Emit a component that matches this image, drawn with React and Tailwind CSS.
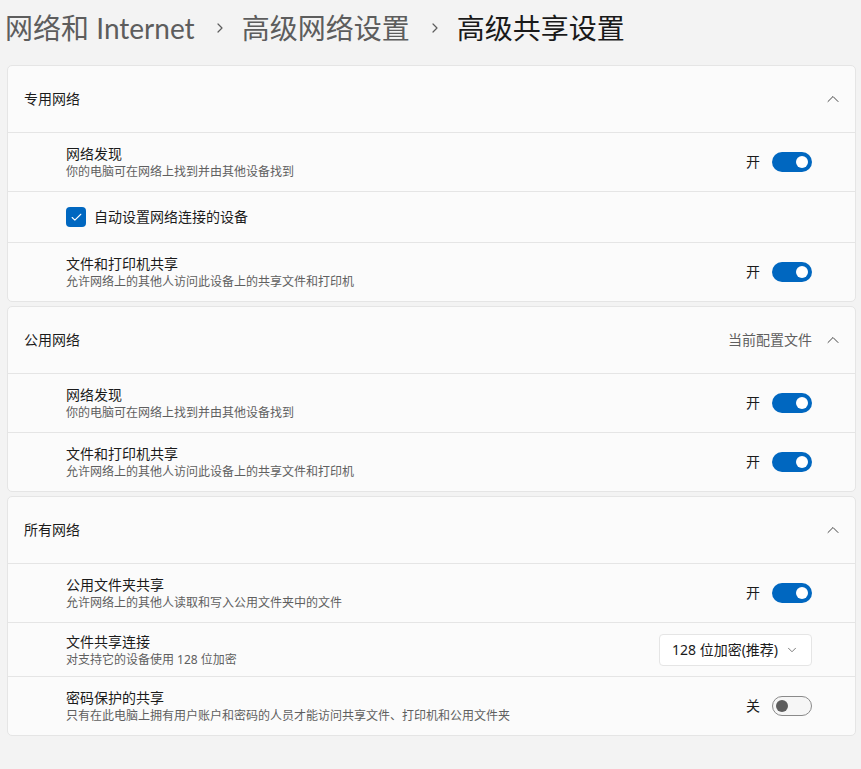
import { ChevronUp, ChevronDown, ChevronRight, Check } from 'lucide-react'

const font = "font-['Noto_Sans','Noto_Sans_CJK_SC',sans-serif]"

function Toggle({ on }) {
  return (
    <div className="flex items-center gap-3">
      <span className="text-sm text-[#1b1b1b]">{on ? '开' : '关'}</span>
      {on ? (
        <div className="w-10 h-5 rounded-full bg-[#0067c0] flex items-center justify-end pr-1">
          <div className="w-3 h-3 rounded-full bg-white"/>
        </div>
      ) : (
        <div className="w-10 h-5 rounded-full border border-[#8a8a8a] bg-[#f6f6f6] flex items-center pl-[3px]">
          <div className="w-3 h-3 rounded-full bg-[#5d5d5d]"/>
        </div>
      )}
    </div>
  )
}

function Row({ title, desc, children, h = 'h-[59px]' }) {
  return (
    <div className={`${h} border-t border-[#e5e5e5] flex items-center pl-[58px] pr-[43px]`}>
      <div className="flex-1 min-w-0">
        <p className="text-sm leading-5 text-[#1b1b1b]">{title}</p>
        <p className="text-xs leading-4 text-[#5f5f5f]">{desc}</p>
      </div>
      {children}
    </div>
  )
}

function Section({ title, extra, children }) {
  return (
    <div className="bg-[#fbfbfb] border border-[#e5e5e5] rounded-[5px]">
      <div className="h-[66px] flex items-center pl-4 pr-[12px]">
        <p className="flex-1 text-sm text-[#1b1b1b]">{title}</p>
        {extra && <span className="text-sm text-[#5f5f5f] mr-[11px]">{extra}</span>}
        <ChevronUp size={20} strokeWidth={1.1} className="text-[#333]"/>
      </div>
      {children}
    </div>
  )
}

export default function App() {
  return (
    <div className={`${font} min-h-[769px] bg-[#f3f3f3] pl-[7px] pr-[5px]`}>
      <div className="h-[65px] flex items-center -ml-[2px] text-[28px] leading-9 pb-[10px]">
        <span className="text-[#5d5d5d]">网络和 <span className="font-['Lato','Noto_Sans',sans-serif]">Internet</span></span>
        <ChevronRight size={16} strokeWidth={1.8} className="text-[#5d5d5d] ml-[17px] mr-[14px]"/>
        <span className="text-[#5d5d5d]">高级网络设置</span>
        <ChevronRight size={16} strokeWidth={1.8} className="text-[#5d5d5d] ml-[17px] mr-[14px]"/>
        <span className="text-[#1a1a1a]">高级共享设置</span>
      </div>

      <div className="flex flex-col gap-1">
        <Section title="专用网络">
          <Row title="网络发现" desc="你的电脑可在网络上找到并由其他设备找到"><Toggle on/></Row>
          <div className="h-[51px] border-t border-[#e5e5e5] flex items-center pl-[58px] gap-2">
            <div className="w-5 h-5 rounded-[4px] bg-[#0067c0] flex items-center justify-center">
              <Check size={13} strokeWidth={2} className="text-white"/>
            </div>
            <span className="text-sm text-[#1b1b1b]">自动设置网络连接的设备</span>
          </div>
          <Row title="文件和打印机共享" desc="允许网络上的其他人访问此设备上的共享文件和打印机"><Toggle on/></Row>
        </Section>

        <Section title="公用网络" extra="当前配置文件">
          <Row title="网络发现" desc="你的电脑可在网络上找到并由其他设备找到"><Toggle on/></Row>
          <Row title="文件和打印机共享" desc="允许网络上的其他人访问此设备上的共享文件和打印机"><Toggle on/></Row>
        </Section>

        <Section title="所有网络">
          <Row title="公用文件夹共享" desc="允许网络上的其他人读取和写入公用文件夹中的文件"><Toggle on/></Row>
          <Row title="文件共享连接" desc="对支持它的设备使用 128 位加密" h="h-[54px]">
            <div className="w-[153px] h-8 bg-white border border-[#e5e5e5] rounded-[4px] flex items-center justify-between pl-3 pr-3">
              <span className="text-sm text-[#1b1b1b]">128 位加密(推荐)</span>
              <ChevronDown size={14} strokeWidth={1.4} className="text-[#5f5f5f]"/>
            </div>
          </Row>
          <Row title="密码保护的共享" desc="只有在此电脑上拥有用户账户和密码的人员才能访问共享文件、打印机和公用文件夹"><Toggle/></Row>
        </Section>
      </div>
    </div>
  )
}
